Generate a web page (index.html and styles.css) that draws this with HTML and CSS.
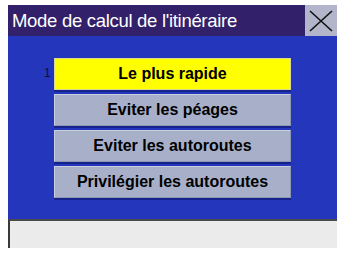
FILE: index.html
```html
<!DOCTYPE html>
<html>
<head>
<meta charset="utf-8">
<link rel="stylesheet" href="styles.css">
</head>
<body>
<div class="screen">
  <div class="titlebar">
    <div class="title">Mode de calcul de l'itinéraire</div>
    <div class="close">
      <svg width="26" height="24" viewBox="0 0 26 24"><path d="M2 2 L24 22 M24 2 L2 22" stroke="#111" stroke-width="1.6" fill="none"/></svg>
    </div>
  </div>
  <div class="panel">
    <div class="list">
      <div class="row">
        <span class="num">1</span>
        <div class="btn selected">Le plus rapide</div>
      </div>
      <div class="row">
        <span class="num"></span>
        <div class="btn">Eviter les péages</div>
      </div>
      <div class="row">
        <span class="num"></span>
        <div class="btn">Eviter les autoroutes</div>
      </div>
      <div class="row">
        <span class="num"></span>
        <div class="btn">Privilégier les autoroutes</div>
      </div>
    </div>
  </div>
  <div class="status"></div>
</div>
</body>
</html>
```

FILE: styles.css
```css
html, body {
  margin: 0;
  padding: 0;
  background: #ffffff;
}
body {
  width: 339px;
  height: 254px;
  overflow: hidden;
  font-family: "Liberation Sans", Arial, sans-serif;
}
.screen {
  margin: 5px 2px 0 8px;
  width: 329px;
  display: flex;
  flex-direction: column;
}
.titlebar {
  height: 31px;
  display: flex;
  background: #33206a;
}
.title {
  flex: 1;
  color: #ffffff;
  font-size: 18.5px;
  letter-spacing: -0.3px;
  line-height: 31px;
  padding-left: 4px;
  white-space: nowrap;
}
.close {
  width: 32px;
  background: #b3b6cb;
  display: flex;
  align-items: center;
  justify-content: center;
}
.close svg {
  display: block;
}
.panel {
  height: 183px;
  background: #2436bb;
  box-sizing: border-box;
  padding-top: 22px;
}
.list {
  display: flex;
  flex-direction: column;
  gap: 4px;
}
.row {
  display: flex;
  align-items: flex-start;
}
.num {
  width: 46px;
  box-sizing: border-box;
  padding-left: 36px;
  padding-top: 9px;
  font-size: 12px;
  line-height: 12px;
  color: #111122;
  height: 32px;
}
.btn {
  width: 237px;
  height: 32px;
  box-sizing: border-box;
  background: #a8b0c9;
  border: 1px solid #c9cde0;
  border-right-color: #8d95b4;
  border-bottom-color: #8d95b4;
  box-shadow: 0 2px 0 #16238a;
  color: #000000;
  font-weight: bold;
  font-size: 16px;
  display: flex;
  align-items: center;
  justify-content: center;
  white-space: nowrap;
}
.btn.selected {
  background: #ffff00;
  border-color: #d8d890;
}
.status {
  height: 29px;
  background: #ebebeb;
  border-top: 2px solid #4a4a4a;
  border-left: 2px solid #3a3a3a;
  box-sizing: border-box;
}
```
